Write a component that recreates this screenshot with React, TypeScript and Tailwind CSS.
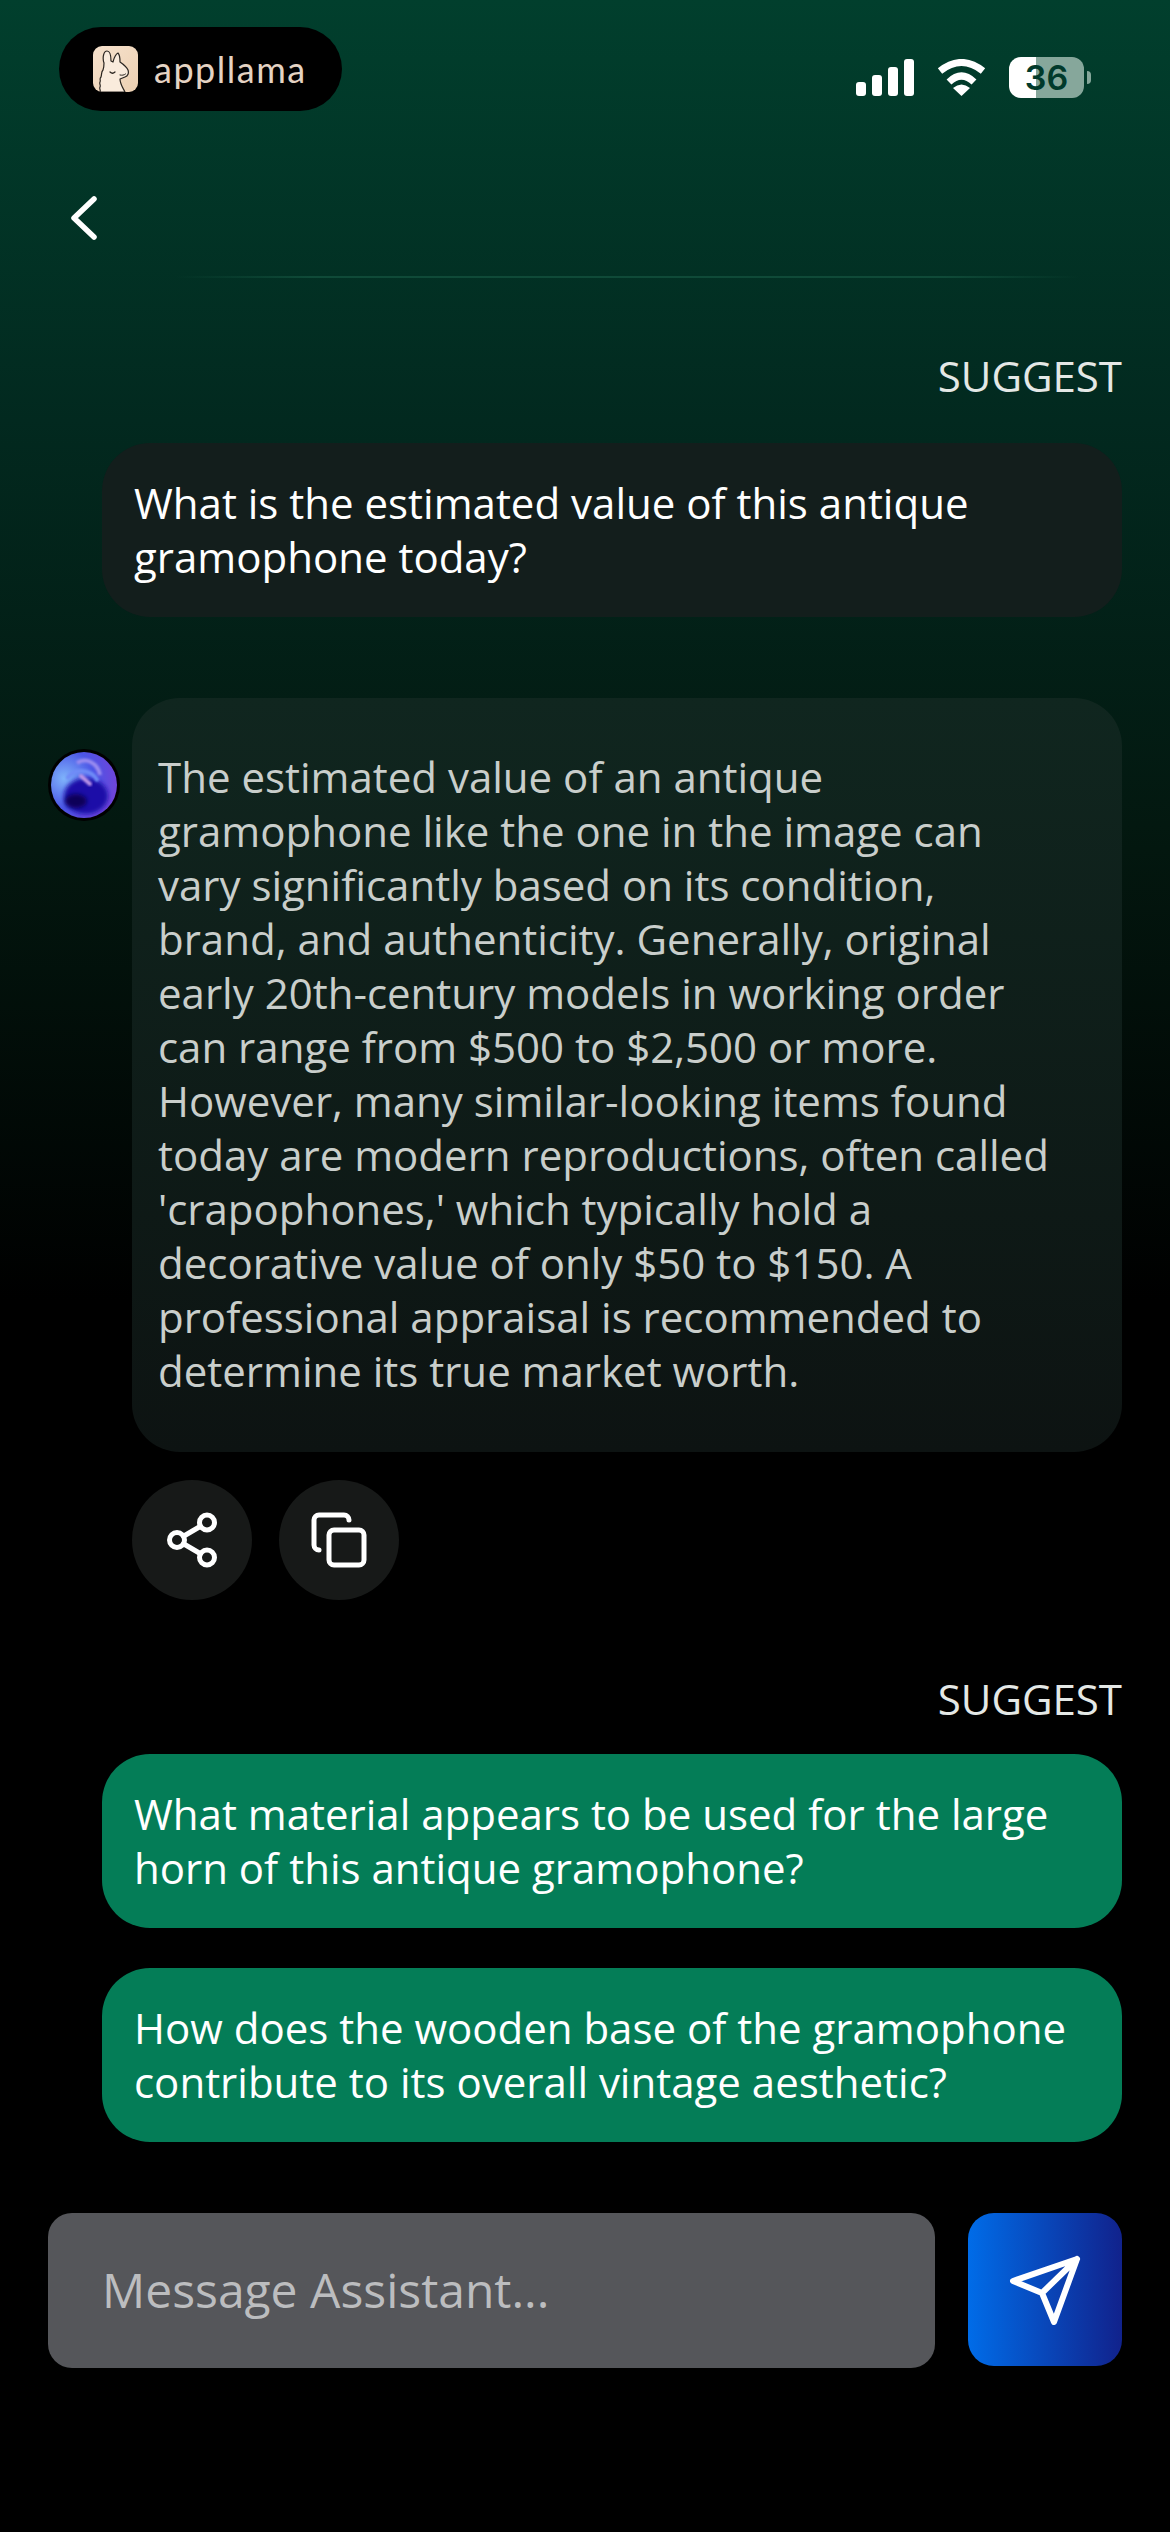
const font = { fontFamily: '"Open Sans", sans-serif' };

function SuggestLabel() {
  return <div className="text-right text-[42px] leading-[54px] text-[#e4e8e6]">SUGGEST</div>;
}

function Llama() {
  return (
    <svg viewBox="0 0 45 46" className="h-[46px] w-[45px]">
      <defs>
        <linearGradient id="llamaBg" x1="0" y1="0" x2="1" y2="1">
          <stop offset="0" stopColor="#f6e2cd" />
          <stop offset="1" stopColor="#ecd0b2" />
        </linearGradient>
      </defs>
      <rect width="45" height="46" rx="9" fill="url(#llamaBg)" />
      <path
        d="M7 46C8 44 6 43 7 41C8 39 6 38 7 36C8 34 6 33 8 31C9 28 8 26 10 24C11 21 11 19 11 17C9 11 11 5 14 5C17 5 18 10 18 15L20 16C21 12 23 8 25 7C27 9 27 13 27 16C30 18 33 20 35 24C36 27 35 30 32 31L27 33C27 38 30 42 32 46Z"
        fill="#f9ebdc"
        stroke="#2a2520"
        strokeWidth="1.200"
        strokeLinejoin="round"
      />
      <path d="M17 26c1.500 1.500 3.500 1.500 5 0" fill="none" stroke="#2a2520" strokeWidth="1.200" strokeLinecap="round" />
      <path d="M27 29c2 .5 4 .2 5.500-1" fill="none" stroke="#2a2520" strokeWidth="1" strokeLinecap="round" />
    </svg>
  );
}

function StatusIcons() {
  return (
    <div className="flex items-center">
      <svg viewBox="0 0 58 37" className="h-[37px] w-[58px]" fill="#fff">
        <rect x="0" y="23" width="10" height="14" rx="3" />
        <rect x="16" y="16" width="10" height="21" rx="3" />
        <rect x="32" y="8" width="10" height="29" rx="3" />
        <rect x="48" y="0" width="10" height="37" rx="3" />
      </svg>
      <svg viewBox="0 0 51 37" className="ml-[22px] h-[37px] w-[51px]">
        <path d="M4 12Q25.500 -5 47 12" fill="none" stroke="#fff" strokeWidth="7" strokeLinecap="butt" />
        <path d="M13 23Q25.500 11 38 23" fill="none" stroke="#fff" strokeWidth="7" strokeLinecap="butt" />
        <path d="M17 29Q25.500 22 34 29L25.500 37z" fill="#fff" />
      </svg>
      <div className="ml-[22px] flex items-center">
        <div
          style={{ fontFamily: '"Inter", sans-serif' }}
          className="flex h-[41px] w-[75px] items-center justify-center rounded-[12px] bg-[linear-gradient(90deg,#ffffff_0,#ffffff_27px,#86a79b_27px,#86a79b_100%)] text-[34px] font-semibold leading-none text-[#013a2b]"
        >
          36
        </div>
        <div className="ml-[3px] h-[13px] w-[4px] rounded-r-full bg-[#86a79b]" />
      </div>
    </div>
  );
}

function Avatar() {
  return (
    <svg viewBox="0 0 72 72" className="mt-[51px] h-[72px] w-[72px] shrink-0">
      <defs>
        <radialGradient id="orbBase" cx="0.2" cy="0.4" r="0.9">
          <stop offset="0" stopColor="#7fb4fb" />
          <stop offset="0.5" stopColor="#4b55e6" />
          <stop offset="1" stopColor="#7a3fd6" />
        </radialGradient>
        <filter id="orbSoft" x="-30%" y="-30%" width="160%" height="160%">
          <feGaussianBlur stdDeviation="2" />
        </filter>
        <filter id="orbSofter" x="-30%" y="-30%" width="160%" height="160%">
          <feGaussianBlur stdDeviation="1.200" />
        </filter>
        <clipPath id="orbClip">
          <circle cx="36" cy="36" r="33" />
        </clipPath>
      </defs>
      <circle cx="36" cy="36" r="36" fill="#000" />
      <circle cx="36" cy="36" r="33" fill="url(#orbBase)" />
      <g clipPath="url(#orbClip)">
        <ellipse cx="38" cy="47" rx="22" ry="18" fill="#1d10a8" filter="url(#orbSoft)" />
        <ellipse cx="28" cy="52" rx="11" ry="7" fill="#0a0558" filter="url(#orbSoft)" />
        <path d="M19 30C24 20 42 18 50 32" fill="none" stroke="#6f8cf7" strokeWidth="4" filter="url(#orbSofter)" />
        <path d="M29 14C38 8 50 14 52 26" fill="none" stroke="#9a8cf0" strokeWidth="4" filter="url(#orbSofter)" />
        <path d="M33 27L42 35" stroke="#bb94e8" strokeWidth="4" strokeLinecap="round" filter="url(#orbSofter)" />
      </g>
    </svg>
  );
}

function RoundButton({ children }: { children: React.ReactNode }) {
  return (
    <button type="button" className="flex h-[120px] w-[120px] items-center justify-center rounded-full bg-[#171918]">
      {children}
    </button>
  );
}

export default function App() {
  return (
    <div
      style={font}
      className="flex h-[2532px] w-[1170px] flex-col overflow-hidden bg-[linear-gradient(180deg,#013f2d_0,#02291f_420px,#03170f_850px,#000000_1300px)] text-white"
    >
      <div className="flex items-start justify-between pl-[59px] pr-[79px] pt-[27px]">
        <div className="flex h-[84px] w-[283px] items-center rounded-full bg-black pl-[34px]">
          <Llama />
          <span
            className="ml-[16px] text-[36px] font-normal leading-none tracking-[1.5px] text-[#e4d3c3]"
            style={{ fontFamily: '"Lato", sans-serif' }}
          >
            appllama
          </span>
        </div>
        <div className="pt-[30px]">
          <StatusIcons />
        </div>
      </div>

      <div className="mt-[85px] pl-[70px]">
        <svg viewBox="0 0 28 44" className="h-[44px] w-[28px]">
          <path d="M24 3L4 22l20 19" fill="none" stroke="#fff" strokeWidth="5.500" strokeLinecap="round" strokeLinejoin="round" />
        </svg>
      </div>

      <div className="ml-[175px] mr-[90px] mt-[36px] h-[2px] bg-[linear-gradient(90deg,transparent,#0f4a38_15%,#0f4a38_85%,transparent)]" />

      <div className="mt-[71px] pr-[48px]">
        <SuggestLabel />
      </div>

      <div className="ml-[102px] mr-[48px] mt-[40px] rounded-[48px] bg-[#131e1c] px-[32px] py-[33px] text-[42px] leading-[54px] text-white">
        What is the estimated value of this antique gramophone today?
      </div>

      <div className="ml-[48px] mr-[48px] mt-[81px] flex gap-[12px]">
        <Avatar />
        <div className="rounded-[48px] bg-[linear-gradient(180deg,#10261f,#0d1312)] pb-[54px] pl-[26px] pr-[62px] pt-[52px] text-[42px] leading-[54px] text-[#c9cecb]">
          The estimated value of an antique gramophone like the one in the image can vary significantly based on its condition, brand, and authenticity. Generally, original early 20th-century models in working order can range from $500 to $2,500 or more. However, many similar-looking items found today are modern reproductions, often called 'crapophones,' which typically hold a decorative value of only $50 to $150. A professional appraisal is recommended to determine its true market worth.
        </div>
      </div>

      <div className="ml-[132px] mt-[28px] flex gap-[27px]">
        <RoundButton>
          <svg viewBox="0 0 24 24" className="h-[60px] w-[60px]" fill="none" stroke="#fff" strokeWidth="2" strokeLinecap="round" strokeLinejoin="round">
            <circle cx="18" cy="5" r="3" />
            <circle cx="6" cy="12" r="3" />
            <circle cx="18" cy="19" r="3" />
            <path d="M8.590 13.510l6.830 3.980M15.410 6.510l-6.820 3.980" />
          </svg>
        </RoundButton>
        <RoundButton>
          <svg viewBox="0 0 24 24" className="h-[60px] w-[60px]" fill="none" stroke="#fff" strokeWidth="2" strokeLinecap="round" strokeLinejoin="round">
            <rect x="8" y="8" width="14" height="14" rx="2" />
            <path d="M4 16c-1.100 0-2-.9-2-2V4c0-1.100.9-2 2-2h10c1.100 0 2 .9 2 2" />
          </svg>
        </RoundButton>
      </div>

      <div className="mt-[72px] pr-[48px]">
        <SuggestLabel />
      </div>

      <div className="ml-[102px] mr-[48px] mt-[28px] flex flex-col gap-[40px]">
        <div className="rounded-[48px] bg-[#047d57] px-[32px] py-[33px] text-[42px] leading-[54px] text-white">
          What material appears to be used for the large horn of this antique gramophone?
        </div>
        <div className="rounded-[48px] bg-[#047d57] px-[32px] py-[33px] text-[42px] leading-[54px] text-white">
          How does the wooden base of the gramophone contribute to its overall vintage aesthetic?
        </div>
      </div>

      <div className="ml-[48px] mr-[48px] mt-[71px] flex items-start gap-[33px]">
        <div className="flex h-[155px] w-[887px] items-center rounded-[24px] bg-[#55565a] pb-[2px] pl-[54px] text-[48px] text-[#bcbdbf]">
          Message Assistant...
        </div>
        <button
          type="button"
          className="flex h-[153px] w-[154px] items-center justify-center rounded-[26px] bg-[linear-gradient(90deg,#006ce8,#11228c)]"
        >
          <svg viewBox="0 0 80 80" className="h-[80px] w-[80px]" fill="none" stroke="#fff" strokeWidth="6" strokeLinecap="round" strokeLinejoin="round">
            <path d="M72 9L8 31l29 12 12 29zM37 43L72 9" />
          </svg>
        </button>
      </div>
    </div>
  );
}
